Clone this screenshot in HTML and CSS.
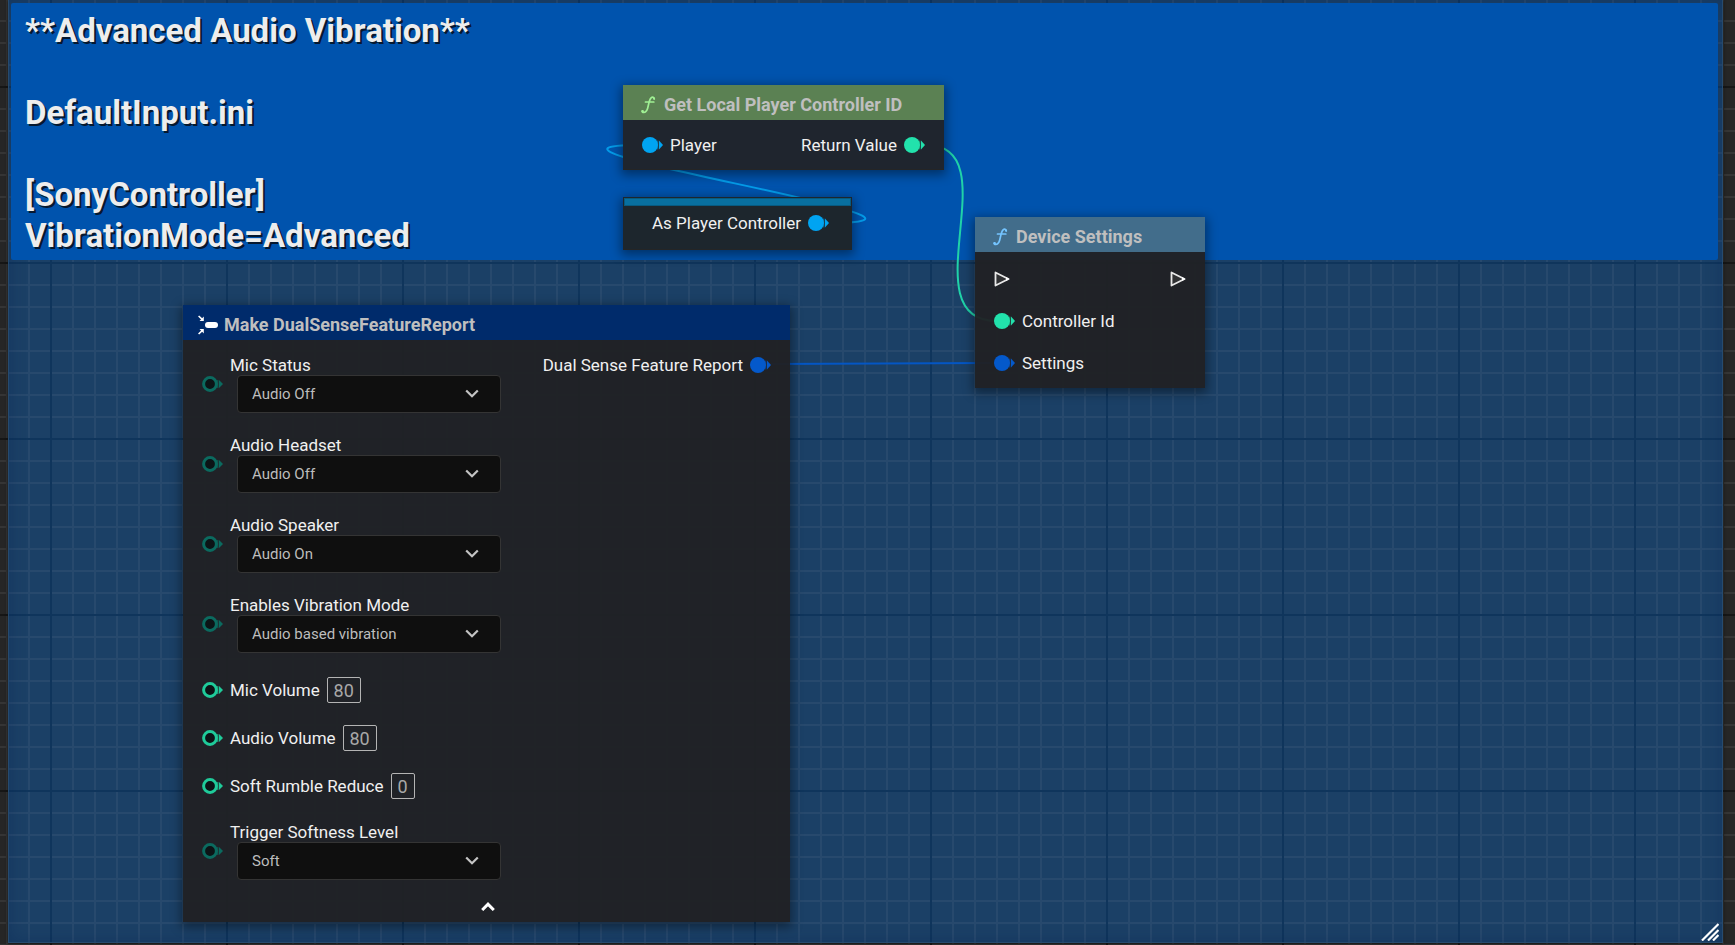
FILE: index.html
```
<!DOCTYPE html>
<html lang="en">
<head>
<meta charset="utf-8">
<title>Blueprint graph</title>
<link rel="stylesheet" href="styles.css">
</head>
<body>
<svg class="defs" width="0" height="0" aria-hidden="true">
  <symbol id="pin" viewBox="0 0 21 16">
    <circle cx="8" cy="8" r="8" fill="currentColor"/>
    <path d="M17 3.5 21 8 17 12.500Z" fill="currentColor"/>
    <path d="M15.500 3.500v9" stroke="currentColor" stroke-width="2" opacity=".4"/>
  </symbol>
  <symbol id="pin-open" viewBox="0 0 21 16">
    <circle cx="8" cy="8" r="6.400" fill="#0c1416" stroke="currentColor" stroke-width="3"/>
    <path d="M17 4 21 8 17 12Z" fill="currentColor"/>
    <path d="M15.500 4v8" stroke="currentColor" stroke-width="2" opacity=".6"/>
  </symbol>
  <symbol id="exec" viewBox="0 0 16 16">
    <path d="M1.500 1.500 14.500 8 1.500 14.500Z" fill="#303133" stroke="#e8e8e8" stroke-width="1.800" stroke-linejoin="round"/>
    <path d="M12 6 15.500 8 12 10Z" fill="#fff"/>
  </symbol>
  <symbol id="func" viewBox="0 0 15 18">
    <path d="M13.300 3C13.300 1 11.400.6 10.100 1.800 8.600 3.200 8 6 7.300 9.500 6.700 13 5.600 16.300 3 16.500 1.600 16.600 1 15.900 1.300 14.800M4.500 6H12.800" fill="none" stroke="currentColor" stroke-width="1.700" stroke-linecap="round"/>
    <circle cx="1.700" cy="15.300" r="1.200" fill="currentColor"/>
    <circle cx="13" cy="2.500" r="1.100" fill="currentColor"/>
  </symbol>
  <symbol id="chevron" viewBox="0 0 14 9">
    <path d="M1.200 1.500 7 7.300 12.800 1.500" fill="none" stroke="currentColor" stroke-width="2.200"/>
  </symbol>
</svg>

<main class="graph">
  <section class="comment">
    <h1 class="comment-title">**Advanced Audio Vibration**<br><br>DefaultInput.ini<br><br>[SonyController]<br>VibrationMode=Advanced</h1>
    <svg class="grip" viewBox="0 0 18 18" aria-hidden="true"><path d="M1 17.500 17.500 1M7 17.500 17.500 7M12 17.500 17.500 12" stroke="#fff" stroke-width="2.200"/></svg>
  </section>

  <svg class="wires" aria-hidden="true">
    <path d="M830 223C1003 223 474 145 640 145" stroke="#049be8"/>
    <path d="M926 145C1012 145 907 321 997 321" stroke="#20d2a8"/>
    <path d="M770 364 990 363" stroke="#0456c4"/>
  </svg>

  <article class="node node-player">
    <header class="node-head"><svg class="func"><use href="#func"/></svg><h2>Get Local Player Controller ID</h2></header>
    <div class="node-row">
      <span class="port object"><svg class="pin"><use href="#pin"/></svg>Player</span>
      <span class="port int">Return Value<svg class="pin"><use href="#pin"/></svg></span>
    </div>
  </article>

  <article class="node node-variable">
    <div class="strip"></div>
    <div class="port object">As Player Controller<svg class="pin"><use href="#pin"/></svg></div>
  </article>

  <article class="node node-device">
    <header class="node-head"><svg class="func"><use href="#func"/></svg><h2>Device Settings</h2></header>
    <div class="node-ports">
      <div class="exec-row"><svg class="exec"><use href="#exec"/></svg><svg class="exec"><use href="#exec"/></svg></div>
      <span class="port int"><svg class="pin"><use href="#pin"/></svg>Controller Id</span>
      <span class="port struct"><svg class="pin"><use href="#pin"/></svg>Settings</span>
    </div>
  </article>

  <article class="node node-make">
    <header class="node-head">
      <svg class="make" viewBox="0 0 20 20"><rect x="7" y="7" width="13" height="6" rx="3" fill="#fff"/><path d="M.6 1 4.500 4.700M.6 19 4.500 15.300" stroke="#fff" stroke-width="1.600"/><path d="M5.800 1.500V6H1.500ZM5.800 18.500V14H1.500Z" fill="#fff"/></svg>
      <h2>Make DualSenseFeatureReport</h2>
    </header>
    <div class="make-body">
      <div class="inputs">
        <div class="choices">
          <div class="field"><svg class="pin dim"><use href="#pin-open"/></svg><div class="choice"><label for="mic">Mic Status</label><div class="select"><select id="mic"><option>Audio Off</option><option>Audio On</option></select><svg><use href="#chevron"/></svg></div></div></div>
          <div class="field"><svg class="pin dim"><use href="#pin-open"/></svg><div class="choice"><label for="headset">Audio Headset</label><div class="select"><select id="headset"><option>Audio Off</option><option>Audio On</option></select><svg><use href="#chevron"/></svg></div></div></div>
          <div class="field"><svg class="pin dim"><use href="#pin-open"/></svg><div class="choice"><label for="speaker">Audio Speaker</label><div class="select"><select id="speaker"><option>Audio On</option><option>Audio Off</option></select><svg><use href="#chevron"/></svg></div></div></div>
          <div class="field"><svg class="pin dim"><use href="#pin-open"/></svg><div class="choice"><label for="mode">Enables Vibration Mode</label><div class="select"><select id="mode"><option>Audio based vibration</option></select><svg><use href="#chevron"/></svg></div></div></div>
        </div>
        <div class="numbers">
          <div class="field"><svg class="pin"><use href="#pin-open"/></svg><label for="micvol">Mic Volume</label><input id="micvol" type="text" value="80"></div>
          <div class="field"><svg class="pin"><use href="#pin-open"/></svg><label for="audiovol">Audio Volume</label><input id="audiovol" type="text" value="80"></div>
          <div class="field"><svg class="pin"><use href="#pin-open"/></svg><label for="rumble">Soft Rumble Reduce</label><input id="rumble" class="short" type="text" value="0"></div>
        </div>
        <div class="field"><svg class="pin dim"><use href="#pin-open"/></svg><div class="choice"><label for="softness">Trigger Softness Level</label><div class="select"><select id="softness"><option>Soft</option></select><svg><use href="#chevron"/></svg></div></div></div>
      </div>
      <span class="port struct">Dual Sense Feature Report<svg class="pin"><use href="#pin"/></svg></span>
    </div>
    <button class="collapse" type="button" aria-label="Collapse"><svg viewBox="0 0 14 9"><path d="M1.200 8 7 2.200 12.800 8" fill="none" stroke="#fff" stroke-width="3"/></svg></button>
  </article>
</main>
</body>
</html>
```
FILE: styles.css
```
* { box-sizing: border-box; }

body {
  margin: 0;
  background: #262626;
  color: #f0f0f0;
  font: 17px/20px Roboto, "Liberation Sans", sans-serif;
}

h1, h2 { margin: 0; font-weight: 700; }
svg { display: block; flex: none; }
.defs { position: absolute; }

.graph {
  position: relative;
  display: flex;
  min-height: 100vh;
  padding: 0 12px 2px 8px;
  overflow: hidden;
  background:
    linear-gradient(90deg, #161616 2px, transparent 2px) 50px 0 / 176px 176px,
    linear-gradient(#161616 2px, transparent 2px) 0 86px / 176px 176px,
    linear-gradient(90deg, #353535 2px, transparent 2px) 6px 0 / 22px 22px,
    linear-gradient(#353535 2px, transparent 2px) 0 20px / 22px 22px,
    #262626;
}

.comment {
  position: relative;
  flex: 1;
  padding: 3px 4px 0 2px;
  border: solid #264b6f;
  border-width: 0 1px 1px;
  background:
    linear-gradient(90deg, #0f355c 2px, transparent 2px) 41px 0 / 176px 176px,
    linear-gradient(#0f355c 2px, transparent 2px) 0 86px / 176px 176px,
    linear-gradient(90deg, #27496d 2px, transparent 2px) 19px 0 / 22px 22px,
    linear-gradient(#27496d 2px, transparent 2px) 0 20px / 22px 22px,
    #1b4066;
  box-shadow: inset 0 0 16px rgba(0, 30, 80, .3), 0 0 3px #111;
}

.comment-title {
  padding: 7px 14px 4px;
  border-radius: 2px;
  background: #0053ad;
  color: #ededed;
  font-size: 33px;
  line-height: 41px;
  text-shadow: 2px 2px 0 #06182f;
}

.grip { position: absolute; right: 3px; bottom: 1px; width: 18px; height: 18px; }

.wires { position: absolute; inset: 0; width: 100%; height: 100%; }
.wires path { fill: none; stroke-width: 2; }

.node {
  position: absolute;
  background: rgba(32, 33, 36, .96);
  box-shadow: 0 3px 10px 2px rgba(0, 0, 0, .4);
}
.node-player { left: 623px; top: 85px; width: 321px; }
.node-variable { left: 623px; top: 197px; width: 229px; padding: 1px 1px 16px; background: #1d262d; }
.node-device { left: 975px; top: 217px; width: 230px; }
.node-make { left: 183px; top: 305px; width: 607px; }
.node-player, .node-variable { border-bottom: 1px solid #252525; }

.node-head {
  display: flex;
  align-items: center;
  gap: 8px;
  height: 35px;
  padding: 4px 18px 0;
}
.node-head h2 { color: #bfbfbf; font-size: 18px; line-height: 20px; }
.node-player .node-head { background: #5b8153; }
.node-device .node-head { background: #426d8b; }
.node-make .node-head { gap: 6px; padding-left: 15px; background: #002b6b; }
.node-player { background: #1f252e; }
.func { width: 15px; height: 18px; color: #a0f094; }
.node-device .func { color: #74c4ff; }
.make { width: 20px; height: 20px; }

.node-row { display: flex; justify-content: space-between; padding: 15px 19px 14px; }
.port { display: flex; align-items: center; gap: 7px; }
.pin { width: 21px; height: 16px; }
.object .pin { color: #00a4f2; }
.int .pin { color: #22e2ac; }
.struct .pin { color: #0459cb; }
.strip { height: 8px; border: 1px solid #075a80; background: #086f9f; }
.node-variable .port { justify-content: flex-end; padding: 7px 22px 0 0; }

.node-ports { display: grid; gap: 22px; padding: 16px 19px 15px; }
.exec-row { display: flex; justify-content: space-between; align-items: center; height: 21px; }
.exec { width: 16px; height: 16px; }

.make-body {
  display: flex;
  justify-content: space-between;
  align-items: flex-start;
  padding: 15px 19px 0;
}
.choices { display: grid; gap: 22px; margin-bottom: 24px; }
.numbers { display: grid; gap: 22px; margin-bottom: 23px; }
.field { display: flex; align-items: center; gap: 7px; }
.field .pin { color: #1fcb9a; }
.field .dim { color: #0b6a5f; }
.choice label { display: block; }

.select { position: relative; width: 264px; margin-left: 7px; }
.select select {
  display: block;
  width: 100%;
  height: 38px;
  padding: 0 40px 0 14px;
  appearance: none;
  border: 1px solid #343434;
  border-radius: 4px;
  background: #0f0f0f;
  color: #bdbdbd;
  font: 15px/20px Roboto, "Liberation Sans", sans-serif;
}
.select svg { position: absolute; right: 22px; top: 14px; width: 14px; height: 9px; color: #c4c4c4; pointer-events: none; }

.field input {
  width: 34px;
  height: 26px;
  padding: 0;
  border: 1px solid #b4b4b4;
  border-radius: 2px;
  background: transparent;
  color: #a8a8a8;
  font: 18px/20px Roboto, "Liberation Sans", sans-serif;
  text-align: center;
}
.field .short { width: 24px; }

.collapse {
  display: flex;
  align-items: center;
  justify-content: center;
  width: 24px;
  height: 24px;
  margin: 14px 0 4px 293px;
  padding: 0;
  border: 0;
  background: none;
}
.collapse svg { width: 14px; height: 9px; }
```
